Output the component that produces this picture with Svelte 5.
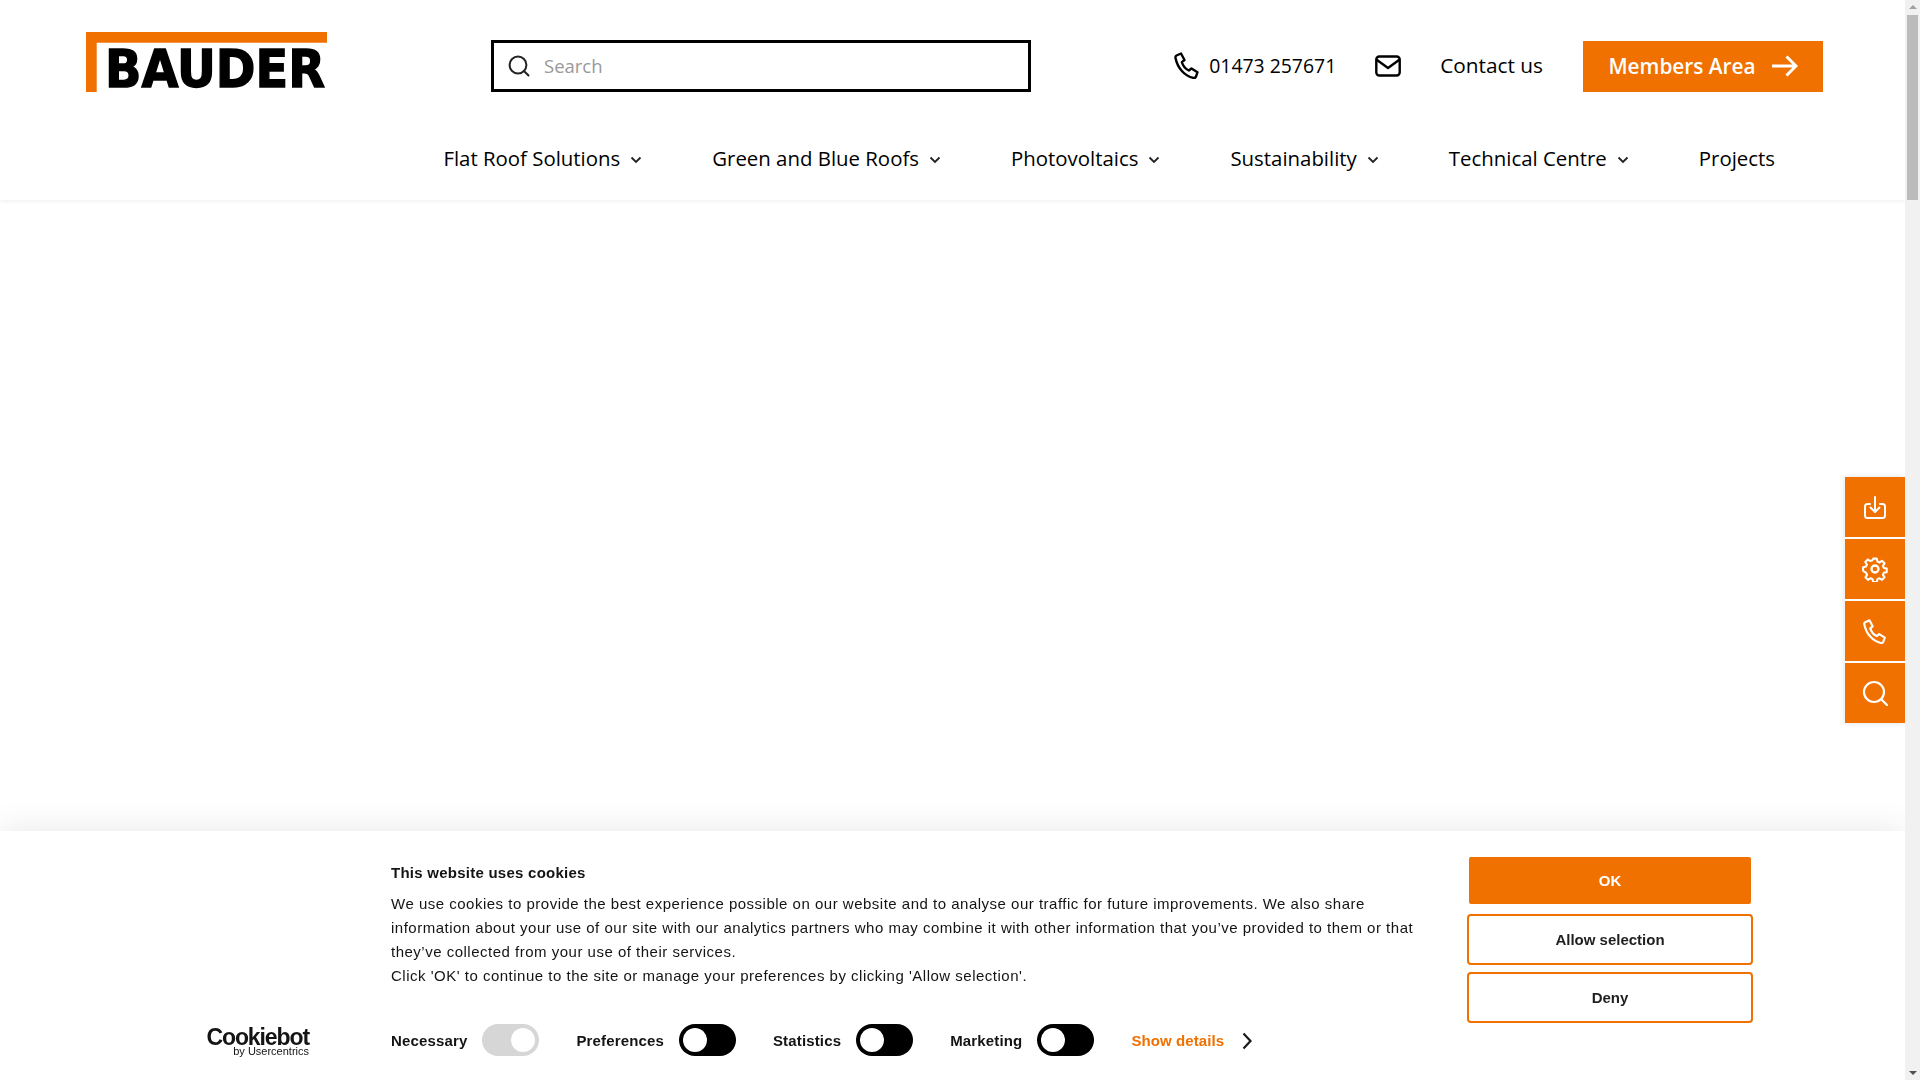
<script>
  const nav = [
    { label: 'Flat Roof Solutions', caret: true },
    { label: 'Green and Blue Roofs', caret: true },
    { label: 'Photovoltaics', caret: true },
    { label: 'Sustainability', caret: true },
    { label: 'Technical Centre', caret: true },
    { label: 'Projects', caret: false }
  ];
  const toggles = [
    { label: 'Necessary', on: true },
    { label: 'Preferences', on: false },
    { label: 'Statistics', on: false },
    { label: 'Marketing', on: false }
  ];
</script>

<div class="page">
  <header class="header">
    <div class="top">
      <svg class="logo" width="265" height="70" viewBox="0 0 265 70" role="img" aria-label="Bauder">
        <path d="M0 0H241V10.7H10.7V60H0Z" fill="#f07000" />
        <text x="19" y="55" font-family="DejaVu Sans" font-weight="700" font-size="52" textLength="220" lengthAdjust="spacingAndGlyphs" stroke="#000" stroke-width="1.4">BAUDER</text>
      </svg>
      <div class="search">
        <svg width="24" height="24" viewBox="0 0 24 24" fill="none" stroke="#222" stroke-width="2" stroke-linecap="round"><circle cx="11" cy="11" r="8.4" /><path d="M17.2 17.2 21.5 21.5" /></svg>
        <span class="placeholder">Search</span>
      </div>
      <div class="contact">
        <span class="phone">
          <svg width="28" height="28" viewBox="0 0 28 28" fill="none" stroke="#000" stroke-width="2.4" stroke-linejoin="round"><path d="M3.5 4.5 8 2.5l3.5 6.500-2.600 2.200c1 3.600 3.400 6.600 7 8.300l2.600-2.100 6 3.800-1.600 4.600c-.4 1-1.400 1.300-2.400 1.100C11.500 25 4.500 17 2.500 7c-.2-1 .1-2 1-2.500Z" /></svg>
          <span class="number">01473 257671</span>
        </span>
        <svg class="mail" width="26" height="22" viewBox="0 0 26 22" fill="none" stroke="#000" stroke-width="2.4" stroke-linejoin="round" stroke-linecap="round"><rect x="1.300" y="1.500" width="23.400" height="19" rx="3" /><path d="M2 5l11 8 11-8" /></svg>
        <span class="contact-us">Contact us</span>
        <span class="members">
          Members Area
          <svg width="26" height="22" viewBox="0 0 26 22" fill="none" stroke="#fff" stroke-width="3"><path d="M0 11H24M14.500 1.500 24 11l-9.500 9.500" /></svg>
        </span>
      </div>
    </div>
    <nav class="nav">
      {#each nav as item}
        <span class="nav-item">
          {item.label}
          {#if item.caret}
            <svg width="12" height="8" viewBox="0 0 12 8" fill="none" stroke="#222" stroke-width="1.800"><path d="M1.500 1.500 6 6l4.500-4.500" /></svg>
          {/if}
        </span>
      {/each}
    </nav>
  </header>

  <aside class="side">
    <span class="side-btn">
      <svg class="dl" width="26" height="26" viewBox="0 0 26 26" fill="none" stroke="#fff" stroke-width="2" stroke-linecap="round" stroke-linejoin="round"><path d="M8 9H5.500A2.500 2.500 0 0 0 3 11.500V20.500A2.500 2.500 0 0 0 5.500 23H20.500A2.500 2.500 0 0 0 23 20.500V11.500A2.500 2.500 0 0 0 20.500 9H18" /><path d="M13 2V17M8.500 12.500 13 17l4.500-4.500" /></svg>
    </span>
    <span class="side-btn">
      <svg width="26" height="26" viewBox="0 0 26 26" fill="none" stroke="#fff" stroke-width="2.300" stroke-linejoin="round"><circle cx="13" cy="13" r="3.500" /><path d="M11 1.500h4l.7 3.200 2.300 1 2.800-1.800 2.800 2.800-1.800 2.800 1 2.300 3.200.7v4l-3.200.7-1 2.300 1.800 2.800-2.800 2.800-2.800-1.800-2.300 1-.7 3.200h-4l-.7-3.200-2.300-1-2.800 1.800-2.800-2.800 1.800-2.800-1-2.300L-.2 15v-4l3.200-.7 1-2.300-1.800-2.800L5 2.400l2.800 1.800 2.300-1Z" transform="translate(1.300 1.300) scale(.9)" /></svg>
    </span>
    <span class="side-btn">
      <svg width="26" height="26" viewBox="0 0 28 28" fill="none" stroke="#fff" stroke-width="2.300" stroke-linejoin="round"><path d="M3.500 4.500 8 2.500l3.500 6.500-2.600 2.200c1 3.600 3.400 6.600 7 8.300l2.600-2.100 6 3.800-1.600 4.600c-.4 1-1.400 1.300-2.400 1.100C11.500 25 4.500 17 2.500 7c-.2-1 .1-2 1-2.500Z" /></svg>
    </span>
    <span class="side-btn">
      <svg width="26" height="26" viewBox="0 0 26 26" fill="none" stroke="#fff" stroke-width="2.200" stroke-linecap="round"><circle cx="12" cy="12" r="10" /><path d="M19.500 19.500 25 25" /></svg>
    </span>
  </aside>

  <section class="dialog">
    <div class="brand">
      <span class="brand-name">Cookiebot</span>
      <span class="brand-by">by Usercentrics</span>
    </div>
    <div class="body">
      <h2>This website uses cookies</h2>
      <p>We use cookies to provide the best experience possible on our website and to analyse our traffic for future improvements. We also share information about your use of our site with our analytics partners who may combine it with other information that you’ve provided to them or that they’ve collected from your use of their services.<br />Click 'OK' to continue to the site or manage your preferences by clicking 'Allow selection'.</p>
      <div class="toggles">
        {#each toggles as t}
          <span class="tg">
            <strong>{t.label}</strong>
            <span class="switch" class:locked={t.on}><span class="knob"></span></span>
          </span>
        {/each}
        <span class="details">Show details
          <svg width="10" height="18" viewBox="0 0 10 18" fill="none" stroke="#1a1a1a" stroke-width="2.200"><path d="M1.500 1.500 8.500 9l-7 7.500" /></svg>
        </span>
      </div>
    </div>
    <div class="actions">
      <button class="ok">OK</button>
      <button>Allow selection</button>
      <button>Deny</button>
    </div>
  </section>

  <div class="scrollbar">
    <span class="arrow up"></span>
    <span class="thumb"></span>
    <span class="arrow down"></span>
  </div>
</div>

<style>
  :global(body) {
    margin: 0;
    background: #fff;
    overflow: hidden;
  }
  .page {
    height: 1080px;
    width: 1905px;
    font-family: "Open Sans", sans-serif;
    color: #000;
  }
  .header {
    height: 200px;
    box-sizing: border-box;
    box-shadow: 0 1px 4px rgba(0, 0, 0, 0.07);
  }
  .top {
    display: flex;
    align-items: flex-start;
    height: 52px;
    padding: 40px 82px 0 86px;
  }
  .logo {
    flex: none;
    margin-top: -8px;
  }
  .search {
    width: 540px;
    height: 52px;
    box-sizing: border-box;
    border: 3px solid #000;
    margin-left: 140px;
    display: flex;
    align-items: center;
    gap: 13px;
    padding-left: 13px;
  }
  .placeholder {
    font-size: 18.5px;
    color: #999;
    margin-bottom: 2px;
  }
  .contact {
    display: flex;
    align-items: center;
    height: 52px;
    margin-left: auto;
    font-size: 20.8px;
  }
  .phone {
    display: flex;
    align-items: center;
    gap: 8px;
    margin-bottom: 2px;
  }
  .number {
    font-size: 19.4px;
  }
  .mail {
    margin-left: 39px;
  }
  .contact-us {
    margin-left: 39px;
    margin-bottom: 2px;
  }
  .members {
    margin: 1px 0 0 40px;
    width: 240px;
    height: 51px;
    box-sizing: border-box;
    padding-bottom: 2px;
    background: #f07000;
    color: #fff;
    font-weight: 600;
    font-size: 20.8px;
    display: flex;
    align-items: center;
    justify-content: center;
    gap: 16px;
  }
  .nav {
    display: flex;
    justify-content: flex-end;
    gap: 70px;
    padding: 52px 130px 0 0;
    font-size: 20.4px;
  }
  .nav-item {
    display: flex;
    align-items: center;
    gap: 10px;
    white-space: nowrap;
  }
  .nav-item svg {
    margin-top: 3px;
  }
  .side {
    position: fixed;
    left: 1845px;
    top: 477px;
    display: flex;
    flex-direction: column;
    gap: 2px;
    box-shadow: 0 0 6px rgba(0, 0, 0, 0.12);
    background: #fff;
  }
  .side-btn {
    width: 60px;
    height: 60px;
    background: #f07000;
    display: flex;
    align-items: center;
    justify-content: center;
  }
  .dl {
    margin-top: 2px;
  }
  .dialog {
    position: fixed;
    left: 0;
    top: 831px;
    width: 1905px;
    height: 249px;
    background: #fff;
    box-shadow: 0 0 32px rgba(0, 0, 0, 0.1);
    font-family: "Liberation Sans", Arial, sans-serif;
    font-size: 15px;
    color: #141414;
    display: flex;
  }
  .brand {
    position: absolute;
    left: 206px;
    top: 198px;
    width: 103px;
    display: flex;
    flex-direction: column;
    align-items: flex-end;
    color: #141414;
  }
  .brand-name {
    font-size: 23px;
    font-weight: 700;
    line-height: 17px;
    letter-spacing: -1.1px;
  }
  .brand-by {
    font-size: 11px;
    line-height: 11px;
  }
  .body {
    margin-left: 391px;
    width: 1040px;
    padding-top: 32px;
  }
  h2 {
    margin: 0;
    font-size: 15px;
    line-height: 20px;
    font-weight: 700;
    letter-spacing: 0.25px;
  }
  p {
    margin: 9px 0 0;
    line-height: 24px;
    letter-spacing: 0.5px;
  }
  .toggles {
    margin-top: 36px;
    display: flex;
    align-items: center;
  }
  .tg {
    display: flex;
    align-items: center;
    gap: 15px;
    margin-right: 37px;
    letter-spacing: 0.15px;
  }
  .switch {
    width: 57px;
    height: 32px;
    border-radius: 16px;
    background: #000;
    position: relative;
    display: block;
  }
  .knob {
    position: absolute;
    top: 4px;
    left: 4px;
    width: 24px;
    height: 24px;
    border-radius: 50%;
    background: #fff;
  }
  .locked {
    background: #d6d6d6;
  }
  .locked .knob {
    left: 29px;
  }
  .details {
    display: flex;
    align-items: center;
    gap: 18px;
    color: #f07000;
    font-weight: 700;
    letter-spacing: 0.1px;
    margin-top: 1px;
  }
  .actions {
    position: absolute;
    left: 1467px;
    top: 26px;
    width: 286px;
    display: flex;
    flex-direction: column;
    gap: 7px;
  }
  button {
    height: 51px;
    box-sizing: border-box;
    border: 2px solid #f07000;
    border-radius: 4px;
    background: #fff;
    font: 700 15px "Liberation Sans", Arial, sans-serif;
    color: #1f1f1f;
    padding: 0;
  }
  .ok {
    width: 282px;
    height: 47px;
    margin: 0 2px 3px;
    background: #f07000;
    border: none;
    border-radius: 2px;
    color: #fff;
  }
  .scrollbar {
    position: fixed;
    top: 0;
    left: 1905px;
    width: 15px;
    height: 1080px;
    background: #f1f1f1;
    display: flex;
    flex-direction: column;
    align-items: center;
  }
  .thumb {
    display: block;
    width: 11px;
    height: 185px;
    background: #bbb;
  }
  .arrow {
    display: block;
    width: 0;
    height: 0;
    border-left: 4px solid transparent;
    border-right: 4px solid transparent;
  }
  .up {
    margin: 5px 0 6px;
    border-bottom: 4px solid #a0a0a0;
  }
  .down {
    margin-top: auto;
    margin-bottom: 5px;
    border-top: 4px solid #505050;
  }
</style>
